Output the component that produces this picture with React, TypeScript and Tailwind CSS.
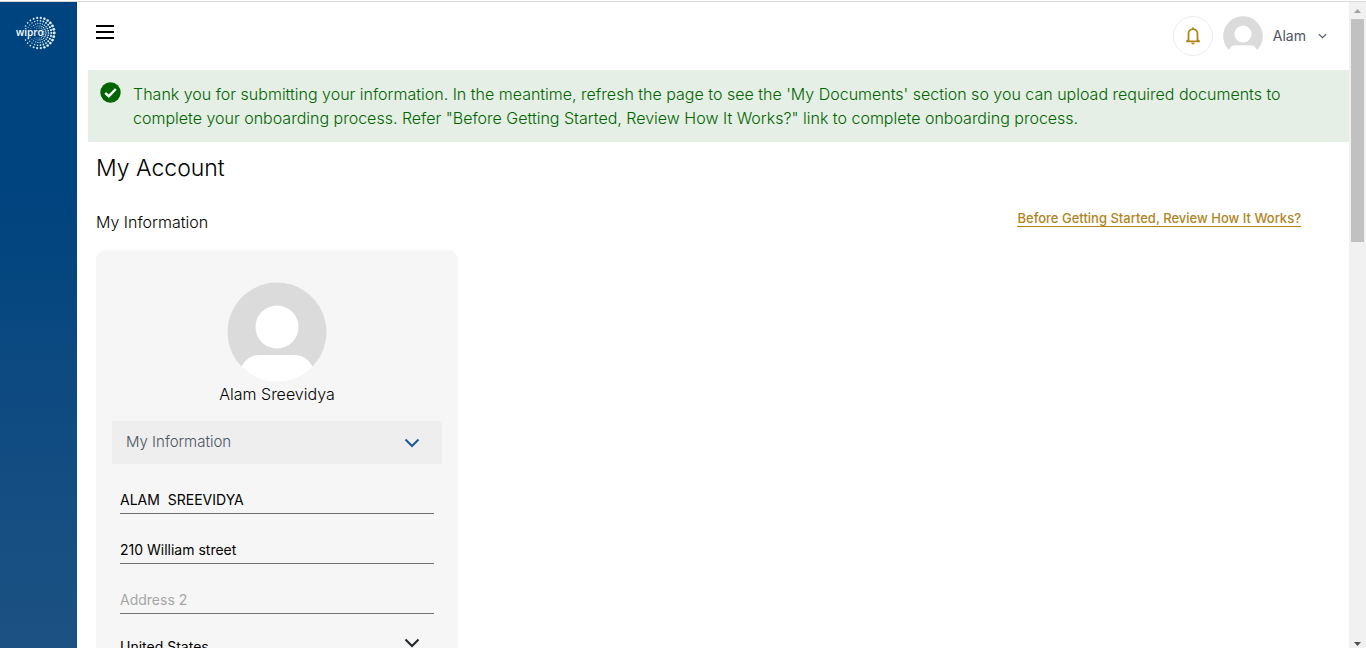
import type { ReactNode } from "react";

function WiproLogo() {
  const rings = [
    { r: 3, n: 12, s: 0.4 },
    { r: 5, n: 18, s: 0.5 },
    { r: 7, n: 22, s: 0.6 },
    { r: 9.5, n: 26, s: 0.7 },
    { r: 12.3, n: 26, s: 0.9 },
    { r: 15.2, n: 26, s: 1.2 },
  ];
  return (
    <svg viewBox="0 0 42 36" className="h-9 w-[42px]" role="img" aria-label="Wipro">
      {rings.map(({ r, n, s }) =>
        Array.from({ length: n }, (_, i) => {
          const a = (i / n) * Math.PI * 2;
          const x = 24 + r * Math.cos(a);
          const y = 18 + r * Math.sin(a);
          if (x < 27 && y > 14 && y < 22) return null;
          const size = s * (0.9 + 0.3 * Math.cos(a));
          return <circle key={`${r}-${i}`} cx={x} cy={y} r={size} fill="#e3f0f8" />;
        }),
      )}
      <text x="1" y="21" fill="#fff" fontFamily="Open Sans, sans-serif" fontSize="10" fontWeight="600">
        wipro
      </text>
    </svg>
  );
}

function Avatar({ className, label }: { className: string; label: string }) {
  return (
    <svg viewBox="0 0 100 100" className={`shrink-0 ${className}`} role="img" aria-label={label}>
      <circle cx="50" cy="50" r="49.5" fill="#fff" />
      <path
        d="M50 .5A49.5 49.5 0 0 0 14.5 84.5C18 78 24 73 32 73H68C76 73 82 78 85.5 84.5A49.5 49.5 0 0 0 50 .5Z"
        fill="#dbdbdb"
      />
      <circle cx="50" cy="45" r="21.5" fill="#fff" />
    </svg>
  );
}

function Chevron({ className }: { className: string }) {
  return (
    <svg viewBox="0 0 16 10" className={className} fill="none" stroke="currentColor" strokeWidth="2" aria-hidden="true">
      <path d="M1.5 1.5L8 8L14.5 1.5" />
    </svg>
  );
}

function Field({ children }: { children: ReactNode }) {
  return <div className="relative flex border-b border-[#707070]">{children}</div>;
}

function Scrollbar() {
  return (
    <div className="flex w-[17px] shrink-0 flex-col items-center bg-[#f1f1f1]" aria-hidden="true">
      <svg viewBox="0 0 17 17" className="size-[17px] shrink-0">
        <path d="M5 11L8.5 7L12 11Z" fill="#a3a3a3" />
      </svg>
      <div className="h-[223px] w-[13px] bg-[#c1c1c1]" />
      <svg viewBox="0 0 17 17" className="mt-auto size-[17px] shrink-0">
        <path d="M5 11L8.5 15L12 11Z" fill="#505050" />
      </svg>
    </div>
  );
}

const inputClass = "h-[27px] w-full bg-transparent text-sm font-normal text-black outline-none placeholder:text-[#a6a6a6]";

export default function App() {
  return (
    <div className="flex h-screen flex-col overflow-hidden bg-white pt-px font-['Inter',sans-serif] font-light text-black">
      <div className="flex min-h-0 grow border-t border-[#dadada]">
        <aside className="flex w-[77px] shrink-0 flex-col bg-linear-to-b from-[#00447f] from-30% to-[#1c5283] pt-[13px] pl-[15px]">
          <a href="#home">
            <WiproLogo />
          </a>
        </aside>

        <div className="flex min-w-0 grow flex-col overflow-hidden pl-[11px]">
          <header className="flex h-[68px] shrink-0 items-center justify-between pr-[22px] pl-2">
            <button type="button" aria-label="Toggle menu" className="mb-2">
              <svg viewBox="0 0 18 14" className="h-[14px] w-[18px]" aria-hidden="true">
                <path d="M0 0H18V2H0ZM0 6H18V8H0ZM0 12H18V14H0Z" fill="#000" />
              </svg>
            </button>
            <div className="flex items-center gap-[10px]">
              <button
                type="button"
                aria-label="Notifications"
                className="flex size-10 items-center justify-center rounded-full border border-[#ececec]"
              >
                <svg viewBox="0 0 16 18" className="h-[18px] w-4" fill="#b1841c" aria-hidden="true">
                  <path
                    fillRule="evenodd"
                    d="M7.1 1.5V1.1A.9.9 0 0 1 8.9 1.1V1.5A5.4 5.4 0 0 1 13.4 6.8V12.4L14.8 13.6V15.3H1.2V13.6L2.6 12.4V6.8A5.4 5.4 0 0 1 7.1 1.5ZM4.4 13.6H11.6V6.8A3.6 3.7 0 0 0 4.4 6.8Z"
                  />
                  <path d="M6.3 15.8H9.7A1.7 1.6 0 0 1 6.3 15.8Z" />
                </svg>
              </button>
              <button type="button" className="flex items-center gap-[10px] text-sm font-normal text-[#4b5563]">
                <Avatar className="size-10" label="Profile picture" />
                <span>Alam</span>
                <Chevron className="ml-[2px] h-[6px] w-[9px]" />
              </button>
            </div>
          </header>

          <div role="status" className="flex shrink-0 gap-3 bg-[#e5efe5] py-3 pr-10 pl-3 text-base text-[#006400]">
            <svg viewBox="0 0 21 21" className="size-[21px] shrink-0" aria-hidden="true">
              <circle cx="10.5" cy="10.5" r="10.2" fill="#006400" />
              <path d="M5.2 10.8L8.8 14.2L15.8 7" fill="none" stroke="#fff" strokeWidth="2.4" />
            </svg>
            <p>
              Thank you for submitting your information. In the meantime, refresh the page to see the 'My Documents'
              section so you can upload required documents to complete your onboarding process. Refer "Before Getting
              Started, Review How It Works?" link to complete onboarding process.
            </p>
          </div>

          <main className="px-2">
            <h1 className="pt-[10px] text-[23px] leading-8">My Account</h1>
            <div className="mt-[26px] flex items-start justify-between pr-10">
              <h2 className="text-base">My Information</h2>
              <a
                href="#how-it-works"
                className="border-b border-[#b1841c] text-[13px] leading-4 font-medium text-[#b1841c]"
              >
                Before Getting Started, Review How It Works?
              </a>
            </div>

            <section className="mt-4 w-[362px] rounded-[10px] bg-[#f6f6f6] px-4 pt-8 pb-8">
              <div className="flex flex-col items-center">
                <Avatar className="size-[100px]" label="Alam Sreevidya" />
                <p className="text-base">Alam Sreevidya</p>
              </div>
              <div className="relative mt-[15px] flex items-center bg-[#eee]">
                <select
                  aria-label="Section"
                  className="h-[43px] w-full appearance-none bg-transparent pl-[14px] text-[15px] text-[#4b5563]"
                >
                  <option>My Information</option>
                  <option>My Documents</option>
                </select>
                <Chevron className="pointer-events-none absolute right-[22px] h-[10px] w-4 text-[#1c5a96]" />
              </div>
              <form className="flex flex-col gap-[22px] px-2 pt-[22px]">
                <Field>
                  <input aria-label="Full name" defaultValue="ALAM  SREEVIDYA" className={inputClass} />
                </Field>
                <Field>
                  <input aria-label="Address 1" defaultValue="210 William street" className={inputClass} />
                </Field>
                <Field>
                  <input aria-label="Address 2" placeholder="Address 2" className={inputClass} />
                </Field>
                <Field>
                  <select
                    aria-label="Country"
                    defaultValue="United States"
                    className="h-[22px] w-full appearance-none bg-transparent text-sm font-normal text-black"
                  >
                    <option>United States</option>
                    <option>Canada</option>
                  </select>
                  <Chevron className="pointer-events-none absolute top-0.5 right-[14px] h-[10px] w-4 text-[#212529]" />
                </Field>
              </form>
            </section>
          </main>
        </div>

        <Scrollbar />
      </div>
    </div>
  );
}
